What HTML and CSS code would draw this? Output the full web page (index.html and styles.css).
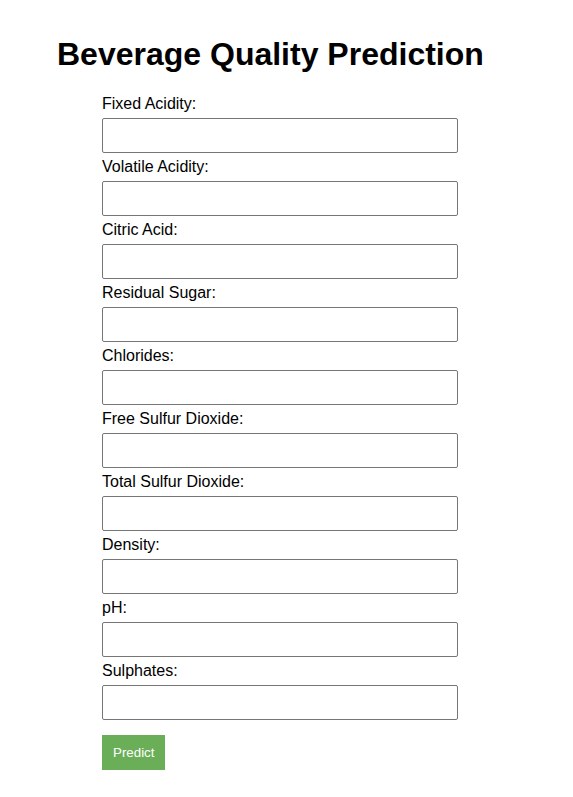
FILE: index.html
```html
<!DOCTYPE html>
<html>
<head>
<meta charset="utf-8">
<title>Beverage Quality Prediction</title>
<link rel="stylesheet" href="styles.css">
</head>
<body>
<div class="page">
  <h1 class="title">Beverage Quality Prediction</h1>
  <form class="form">
    <label class="label" for="f1">Fixed Acidity:</label>
    <input class="field" id="f1" type="text">
    <label class="label" for="f2">Volatile Acidity:</label>
    <input class="field" id="f2" type="text">
    <label class="label" for="f3">Citric Acid:</label>
    <input class="field" id="f3" type="text">
    <label class="label" for="f4">Residual Sugar:</label>
    <input class="field" id="f4" type="text">
    <label class="label" for="f5">Chlorides:</label>
    <input class="field" id="f5" type="text">
    <label class="label" for="f6">Free Sulfur Dioxide:</label>
    <input class="field" id="f6" type="text">
    <label class="label" for="f7">Total Sulfur Dioxide:</label>
    <input class="field" id="f7" type="text">
    <label class="label" for="f8">Density:</label>
    <input class="field" id="f8" type="text">
    <label class="label" for="f9">pH:</label>
    <input class="field" id="f9" type="text">
    <label class="label" for="f10">Sulphates:</label>
    <input class="field" id="f10" type="text">
    <button class="btn" type="button">Predict</button>
  </form>
</div>
</body>
</html>
```
FILE: styles.css
```css
html, body {
  margin: 0;
  padding: 0;
  background: #ffffff;
}
body {
  font-family: "Liberation Sans", Arial, sans-serif;
  color: #000;
}
.page {
  padding: 36px 0 0 57px;
}
.title {
  margin: 0;
  font-size: 32px;
  font-weight: bold;
  line-height: 37px;
}
.form {
  display: flex;
  flex-direction: column;
  align-items: flex-start;
  margin: 21px 0 0 45px;
}
.label {
  display: block;
  font-size: 16px;
  line-height: 18px;
  padding-top: 1px;
  margin-bottom: 5px;
}
.field {
  box-sizing: border-box;
  width: 356px;
  height: 35px;
  margin: 0 0 4px 0;
  padding: 4px 8px;
  border: 1px solid #767676;
  border-radius: 2px;
  font-family: inherit;
  font-size: 14px;
}
.btn {
  margin-top: 11px;
  box-sizing: border-box;
  height: 35px;
  padding: 0 11px;
  border: none;
  background: #6aae57;
  color: #ffffff;
  font-family: inherit;
  font-size: 13.333px;
}
```
